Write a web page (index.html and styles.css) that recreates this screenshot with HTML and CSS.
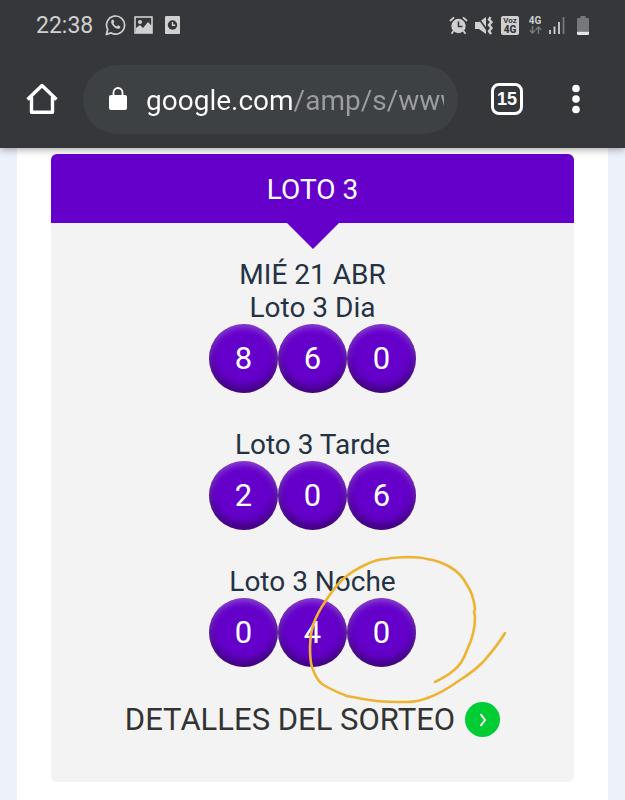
FILE: index.html
```html
<!DOCTYPE html>
<html lang="es">
<head>
    <meta charset="UTF-8">
    <meta name="viewport" content="width=device-width, initial-scale=1.0">
    <title>Loto 3</title>
    <link rel="stylesheet" href="styles.css">
</head>
<body>
    <header class="browser">
        <!-- Status bar -->
        <div class="status-bar">
            <span class="clock">22:38</span>
            <svg class="icon-whatsapp" width="21" height="22" viewBox="0 0 21 22">
                <path d="M1.3 20.4l1.4-5A9 9 0 1 1 6.200 18.900z" fill="none" stroke="#d0d0d0" stroke-width="1.700" stroke-linejoin="round"/>
                <path d="M7.200 5.700c-1.600 1-1.400 3.200.2 5.400 1.800 2.500 4.300 4.100 6.300 3.600 1.100-.3 1.800-1.300 1.700-2.300l-2.300-1.200-1.300 1.300c-1.500-.6-2.700-1.800-3.400-3.200l1-1.200-1-2.400z" fill="#d0d0d0"/>
            </svg>
            <svg class="icon-picture" width="19" height="18" viewBox="0 0 19 18">
                <rect x="1" y="1" width="17" height="16" fill="none" stroke="#d0d0d0" stroke-width="1.600"/>
                <circle cx="6" cy="6" r="2" fill="#d0d0d0"/>
                <path d="M2 12l4-3 3 3 5-6 4 4v7H2z" fill="#d0d0d0"/>
            </svg>
            <svg class="icon-card-clock" width="15" height="18" viewBox="0 0 15 18">
                <rect width="15" height="18" rx="1" fill="#d0d0d0"/>
                <circle cx="7.500" cy="9" r="4.700" fill="#36373b"/>
                <path d="M7.500 6v3.300h2.700" fill="none" stroke="#d0d0d0" stroke-width="1.400"/>
            </svg>
            <div class="status-right">
                <svg width="19" height="19" viewBox="0 0 19 19">
                    <circle cx="9.500" cy="10" r="7.200" fill="#d0d0d0"/>
                    <path d="M1 5l4-3.600M18 5l-4-3.600M4.500 15l-2 2.800M14.500 15l2 2.800" stroke="#d0d0d0" stroke-width="1.800"/>
                    <path d="M9.500 5.500v5h4" fill="none" stroke="#36373b" stroke-width="1.600"/>
                </svg>
                <svg width="19" height="19" viewBox="0 0 19 19">
                    <path d="M0 6h4l7-5v17l-7-5H0z" fill="#d0d0d0"/>
                    <path d="M2 0l10 14" stroke="#36373b" stroke-width="1.600"/>
                    <path d="M15.500 1l-1.500 2.500 2.500 2.500-2.500 3 2.500 3-2.500 3 2 3" fill="none" stroke="#d0d0d0" stroke-width="2.400"/>
                </svg>
                <span class="volte"><span>Voz</span><b>4G</b></span>
                <span class="network">
                    <b>4G</b>
                    <svg width="13" height="8" viewBox="0 0 13 8">
                        <path d="M3.500 0v7M.8 4.300l2.700 2.700 2.700-2.700M9.500 8V1M6.800 3.700L9.500 1l2.700 2.700" fill="none" stroke="#77787b" stroke-width="1.500"/>
                    </svg>
                </span>
                <svg width="16" height="18" viewBox="0 0 16 18">
                    <path d="M1 14v4M5.500 10.500V18M10 6v12" stroke="#d0d0d0" stroke-width="1.800"/>
                    <path d="M14.500 1v17" stroke="#77787b" stroke-width="1.800"/>
                </svg>
                <svg class="icon-battery" width="12" height="19" viewBox="0 0 12 19">
                    <path d="M3.500 0h5v2H11a1 1 0 0 1 1 1v12H0V3a1 1 0 0 1 1-1h2.500z" fill="#77787b"/>
                    <path d="M0 15.500h12V18a1 1 0 0 1-1 1H1a1 1 0 0 1-1-1z" fill="#e4e4e4"/>
                </svg>
            </div>
        </div>

        <!-- Address bar -->
        <div class="toolbar">
            <button class="home-button" aria-label="Inicio">
                <svg width="32" height="32" viewBox="0 0 32 32">
                    <path d="M1.500 16.500L16 2.500l14.500 14M5.500 14v15.300h21V14" fill="none" stroke="#fff" stroke-width="3.400" stroke-linejoin="round"/>
                </svg>
            </button>
            <div class="address">
                <svg width="18" height="24" viewBox="0 0 18 24">
                    <rect y="8" width="18" height="15" rx="2" fill="#fff"/>
                    <path d="M4.500 9V5.500a4.500 4.500 0 0 1 9 0V9" fill="none" stroke="#fff" stroke-width="1.800"/>
                </svg>
                <input class="url" type="text" aria-label="Dirección" value="google.com/amp/s/www.">
            </div>
            <button class="tabs-button" aria-label="Pestañas">15</button>
            <button class="menu-button" aria-label="Menú">
                <svg width="8" height="30" viewBox="0 0 8 30">
                    <circle cx="4" cy="4.500" r="3.800" fill="#fff"/>
                    <circle cx="4" cy="15" r="3.800" fill="#fff"/>
                    <circle cx="4" cy="25.500" r="3.800" fill="#fff"/>
                </svg>
            </button>
        </div>
    </header>

    <main class="page">
        <article class="card">
            <h1 class="card-title">LOTO 3</h1>
            <div class="card-body">
                <p class="date">MIÉ 21 ABR</p>

                <section class="draw">
                    <h2>Loto 3 Dia</h2>
                    <div class="balls">
                        <span class="ball">8</span>
                        <span class="ball">6</span>
                        <span class="ball">0</span>
                    </div>
                </section>

                <section class="draw">
                    <h2>Loto 3 Tarde</h2>
                    <div class="balls">
                        <span class="ball">2</span>
                        <span class="ball">0</span>
                        <span class="ball">6</span>
                    </div>
                </section>

                <section class="draw">
                    <h2>Loto 3 Noche</h2>
                    <div class="balls">
                        <span class="ball">0</span>
                        <span class="ball">4</span>
                        <span class="ball">0</span>
                    </div>
                    <!-- Hand drawn circle -->
                    <svg class="scribble" width="205" height="155" viewBox="305 550 205 155">
                        <path d="M435 682C441 679 447 676 453 671C460 666 464 659 467 650C472 640 475 628 475 617L474 612L475 609C474 600 472 592 467 585C463 577 457 571 450 567C443 563 435 560 427 559C420 557 414 557 407 557C400 558 393 557 387 559C380 559 373 561 367 564C358 568 350 573 343 579C336 586 330 594 325 602C320 609 316 617 313 625C311 632 310 640 310 647C310 654 310 661 312 667C314 673 317 680 322 684C330 689 339 693 347 696C357 698 367 700 377 701C387 702 397 702 407 702C415 702 423 700 430 697C441 693 450 687 460 680C468 675 476 669 483 662C491 653 499 643 505 633" fill="none" stroke="#edb333" stroke-width="2.600" stroke-linecap="round" stroke-linejoin="round"/>
                    </svg>
                </section>

                <a class="details" href="#">
                    DETALLES DEL SORTEO
                    <span class="details-arrow">
                        <svg width="8" height="14" viewBox="0 0 8 14">
                            <path d="M1.500 1L6 7l-4.500 6" fill="none" stroke="#fff" stroke-width="2"/>
                        </svg>
                    </span>
                </a>
            </div>
        </article>
    </main>
</body>
</html>
```
FILE: styles.css
```css
/* General Styles */
* {
    box-sizing: border-box;
}

body {
    margin: 0;
    font-family: Roboto, sans-serif;
    font-size: 28px;
    line-height: 33px;
    color: #253244;
    background-color: #edf1fa;
}

svg {
    display: block;
    flex: none;
}

button {
    padding: 0;
    border: none;
    background: none;
    color: #fff;
    font-family: inherit;
    cursor: pointer;
}

/* Browser header */
.browser {
    position: relative;
    background-color: #36373b;
    box-shadow: 0 1px 8px rgba(0, 0, 0, 0.4);
}

.status-bar {
    display: flex;
    align-items: center;
    height: 50px;
    padding: 0 36px;
    color: #d0d0d0;
}

.clock {
    font-size: 23px;
}

.icon-whatsapp {
    margin-left: 12px;
}

.icon-picture {
    margin-left: 8px;
}

.icon-card-clock {
    margin-left: 12px;
}

.status-right {
    display: flex;
    align-items: center;
    gap: 7px;
    margin-left: auto;
}

.volte {
    display: flex;
    flex-direction: column;
    align-items: center;
    width: 18px;
    height: 19px;
    border-radius: 2px;
    background-color: #d0d0d0;
    color: #36373b;
    font-size: 8px;
    font-weight: bold;
    line-height: 9px;
}

.volte b {
    font-size: 10px;
    line-height: 10px;
}

.network {
    display: flex;
    flex-direction: column;
    align-items: center;
    width: 14px;
    margin-left: 2px;
    font-size: 10px;
    line-height: 10px;
}

.icon-battery {
    margin-left: 5px;
}

.toolbar {
    display: flex;
    align-items: center;
    height: 98px;
    padding: 0 45px 0 26px;
}

.address {
    display: flex;
    flex: 1;
    align-items: center;
    gap: 19px;
    min-width: 0;
    height: 69px;
    margin: 0 33px 0 25px;
    padding: 0 14px 0 26px;
    border-radius: 35px;
    background-color: #3d4144;
}

.url {
    flex: 1;
    min-width: 0;
    height: 40px;
    padding: 2px 0 0;
    border: none;
    outline: none;
    font-family: inherit;
    font-size: 28px;
    /* Domain in white, rest of the path in grey */
    background: linear-gradient(90deg, #fff 147px, #9b9d9f 147px);
    -webkit-background-clip: text;
    background-clip: text;
    -webkit-text-fill-color: transparent;
}

.tabs-button {
    width: 32px;
    height: 32px;
    margin-right: 49px;
    border: 3px solid #fff;
    border-radius: 8px;
    font-family: "Liberation Sans Narrow", "Liberation Sans", sans-serif;
    font-size: 18px;
    font-weight: bold;
}

/* Results */
.page {
    margin: 0 17px;
    padding: 6px 34px 18px;
    background-color: #fff;
}

.card {
    border-radius: 6px;
    background-color: #f3f3f3;
    text-align: center;
}

.card-title {
    position: relative;
    margin: 0;
    padding: 19px 0 17px;
    border-radius: 6px 6px 0 0;
    background-color: #6500cb;
    color: #fff;
    font-size: 28px;
    font-weight: normal;
}

.card-title::after {
    content: "";
    position: absolute;
    top: 100%;
    left: 50%;
    margin-left: -26px;
    border: 26px solid transparent;
    border-top-color: #6500cb;
    border-bottom: none;
}

.card-body {
    padding: 35px 0 45px;
}

.date {
    margin: 0;
}

.draw {
    position: relative;
    margin-bottom: 35px;
}

.draw h2 {
    margin: 0;
    font-size: 28px;
    font-weight: normal;
}

.balls {
    display: flex;
    justify-content: center;
}

.ball {
    width: 69px;
    height: 69px;
    border-radius: 50%;
    background-color: #6500cb;
    box-shadow: inset 0 -5px 10px rgba(0, 0, 0, 0.45), inset 0 3px 6px rgba(255, 255, 255, 0.3);
    color: #fff;
    font-size: 31px;
    line-height: 69px;
}

.scribble {
    position: absolute;
    top: -15px;
    left: 50%;
    margin-left: -8px;
    pointer-events: none;
}

.details {
    display: flex;
    align-items: center;
    justify-content: center;
    gap: 10px;
    color: #333;
    font-size: 31px;
    line-height: 35px;
    text-decoration: none;
}

.details-arrow {
    display: flex;
    align-items: center;
    justify-content: center;
    width: 35px;
    height: 35px;
    border-radius: 50%;
    background-color: #00cc33;
}
```
